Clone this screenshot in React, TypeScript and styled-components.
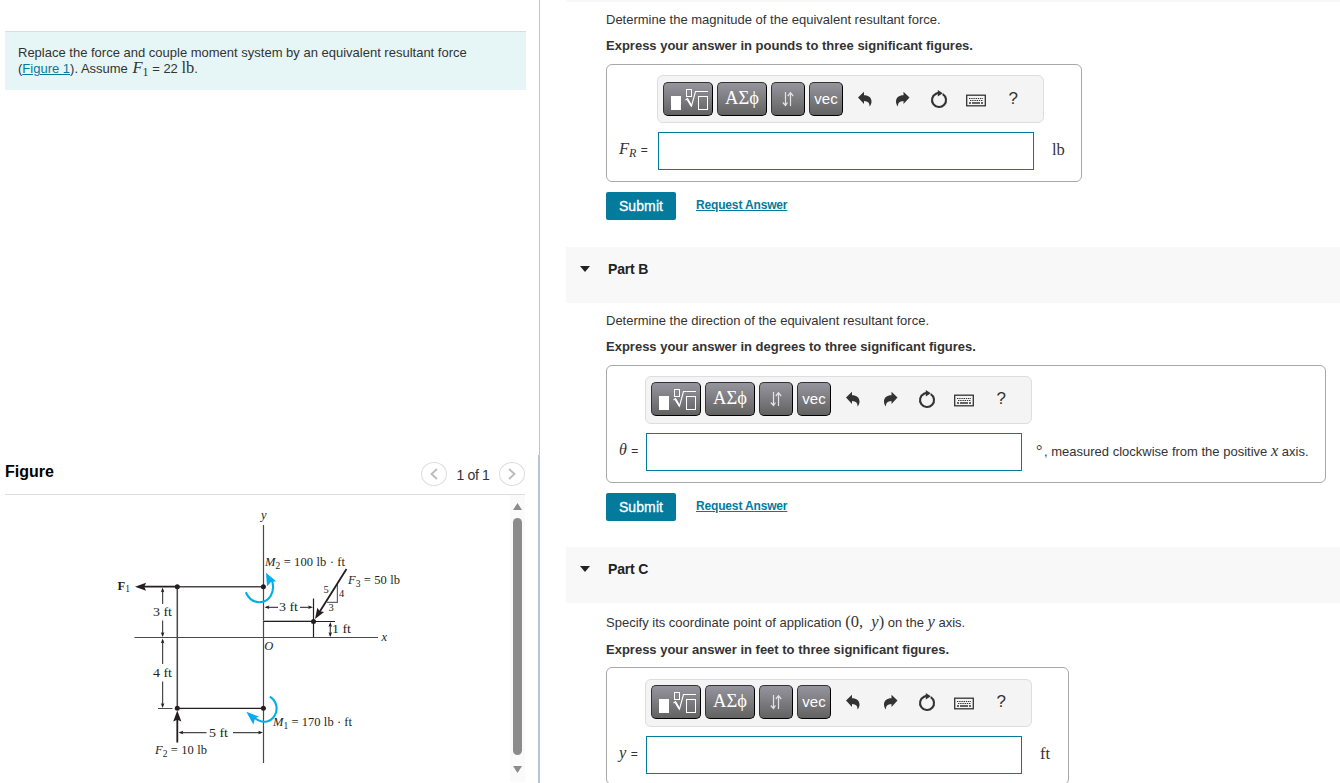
import React from "react";
import styled, { createGlobalStyle } from "styled-components";

const GlobalStyle = createGlobalStyle`
  * {
    box-sizing: border-box;
  }
  body {
    margin: 0;
    background: #fff;
    color: #333;
    font-family: "Liberation Sans", Arial, sans-serif;
    font-size: 13px;
    overflow: hidden;
  }
`;

const Page = styled.div`
  display: flex;
  height: 783px;
  overflow: hidden;
`;

const LeftPane = styled.div`
  width: 540px;
  flex-shrink: 0;
  display: flex;
  flex-direction: column;
`;

const ProblemArea = styled.div`
  height: 455px;
  padding: 31px 13px 0 5px;
  border-right: 1px solid #b5c7d9;
`;

const Problem = styled.div`
  height: 59px;
  padding: 13px 13px 0;
  background: #e6f6f6;
  border-top: 1px solid #d7dfe0;
  line-height: 16px;
`;

const Line = styled.div`
  height: 16px;
  white-space: nowrap;
`;

const Link = styled.a<{ $bold?: boolean }>`
  color: #047b9c;
  text-decoration: underline;
  font-weight: ${(p) => (p.$bold ? "bold" : "normal")};
`;

const MathText = styled.span<{ $size?: string; $italic?: boolean }>`
  font-family: "Liberation Serif", serif;
  font-size: ${(p) => p.$size || "16.5px"};
  font-style: ${(p) => (p.$italic ? "italic" : "normal")};
  line-height: 0;

  sub {
    font-size: 12px;
    line-height: 0;
    vertical-align: -3px;
  }
`;

const ProblemMath = styled(MathText)`
  margin-left: 1px;
`;

const FigureArea = styled.div`
  flex: 1;
  padding: 0 13px 0 5px;
  border-right: 2px solid #b5c7d9;
`;

const FigureHeader = styled.div`
  display: flex;
  align-items: center;
  height: 40px;
  width: 520px;
  border-bottom: 1px solid #ddd;
`;

const FigureTitle = styled.h2`
  margin: 0 auto 6px 0;
  font-size: 16px;
  color: #000;
`;

const PagerButton = styled.div`
  display: flex;
  align-items: center;
  justify-content: center;
  width: 26px;
  height: 24px;
  border: 1px solid #ddd;
  border-radius: 50%;
  margin-bottom: 2px;
`;

const PagerText = styled.span`
  width: 52px;
  text-align: center;
  font-size: 14px;
  letter-spacing: -0.3px;
  padding-top: 1px;
`;

const FigureBody = styled.div`
  display: flex;
  width: 520px;
  height: 288px;
`;

const Scrollbar = styled.div`
  width: 15px;
  height: 287px;
  background: #fafafa;
  display: flex;
  flex-direction: column;
  align-items: center;
  padding: 8px 0 9px;
`;

const Thumb = styled.div`
  width: 9px;
  flex: 1;
  margin: 8px 0 11px;
  border-radius: 5px;
  background: #8b8b8b;
`;

const RightPane = styled.div`
  flex: 1;
  min-width: 0;
  padding-left: 26px;
`;

const TopStrip = styled.div`
  height: 2px;
  background: #f8f8f8;
`;

const PartHeader = styled.div`
  display: flex;
  align-items: flex-start;
  height: 56px;
  padding: 14px 0 0 14px;
  background: #f8f8f8;

  svg {
    margin-top: 5px;
  }
`;

const PartTitle = styled.h3`
  margin: 0 0 0 18px;
  font-size: 14px;
  line-height: 16px;
  letter-spacing: -0.15px;
  color: #222;
`;

const PartBody = styled.div<{ $height: string }>`
  height: ${(p) => p.$height};
  padding: 9px 0 0 40px;
`;

const Prompt = styled.p<{ $tall?: boolean }>`
  margin: ${(p) => (p.$tall ? "2px 0 11px" : "0 0 10px")};
  height: 17px;
  line-height: 17px;
  white-space: nowrap;
`;

const Instructions = styled.p<{ $gap?: string }>`
  margin: 0 0 ${(p) => p.$gap || "10px"};
  height: 16px;
  line-height: 16px;
  font-weight: bold;
  white-space: nowrap;
`;

const AnswerBox = styled.div<{ $width: string; $label: string; $top?: string }>`
  display: grid;
  grid-template-columns: ${(p) => p.$label} 388px 1fr;
  align-content: start;
  width: ${(p) => p.$width};
  height: 118px;
  border: 1px solid #a8a8a8;
  border-radius: 6px;
  padding-top: ${(p) => p.$top || "10px"};
`;

const Toolbar = styled.div<{ $raised?: boolean }>`
  grid-column: 2 / 4;
  display: flex;
  align-items: center;
  gap: 4px;
  width: 387px;
  height: 48px;
  padding: ${(p) => (p.$raised ? "0 0 2px 5px" : "0 0 0 5px")};
  border: 1px solid #ddd;
  border-radius: 6px;
  background: #f4f4f4;
`;

const ToolButton = styled.div<{ $wide?: boolean; $font?: string }>`
  display: flex;
  align-items: center;
  justify-content: center;
  width: ${(p) => (p.$wide ? "50px" : "34px")};
  height: 34px;
  border: 1px solid #333;
  border-right-color: #000;
  border-bottom-color: #000;
  border-radius: 5px;
  background: linear-gradient(#96959e, #626262);
  color: #fff;
  font: ${(p) => p.$font || '15px "Liberation Sans", sans-serif'};
  padding-bottom: 2px;
`;

const ToolIcons = styled.div`
  display: flex;
  margin-left: -1px;
`;

const ToolIcon = styled.div`
  display: flex;
  align-items: center;
  justify-content: center;
  width: 37.2px;
  height: 34px;
  font-size: 17px;
`;

const FieldLabel = styled.div`
  padding-left: 12px;
  line-height: 37px;
  height: 38px;
  margin-top: 9px;
  white-space: nowrap;
  font-size: 12px;
  word-spacing: 1px;
`;

const Field = styled.div`
  width: 376px;
  height: 38px;
  margin: 9px 0 0 1px;
  border: 1px solid #047b9c;
  background: #fff;
`;

const Unit = styled.div<{ $indent?: string }>`
  margin: 9px 0 0 ${(p) => p.$indent || "7px"};
  height: 38px;
  line-height: 37px;
  white-space: nowrap;
`;

const Degree = styled.span`
  display: inline-block;
  width: 8px;
  line-height: 0;
  font-family: "Liberation Serif", serif;
  font-size: 16px;
`;

const Actions = styled.div`
  display: flex;
  align-items: center;
  gap: 20px;
  margin-top: 10px;
  font-size: 12px;

  a {
    margin-bottom: 3px;
    letter-spacing: -0.16px;
  }
`;

const SubmitButton = styled.div`
  width: 70px;
  height: 28px;
  border-radius: 2px;
  background: #047b9c;
  color: #fff;
  font-size: 14px;
  line-height: 28px;
  text-align: center;
  letter-spacing: 0.1px;
  -webkit-text-stroke: 0.3px #fff;
`;

const TemplateIcon = () => (
  <svg width="40" height="25" viewBox="0 0 40 25" fill="none" stroke="#fff">
    <rect x="3" y="10" width="10" height="14" fill="#fff" stroke="none" />
    <path d="M17.5 14l2-1.5 4 7.5 4-14.5H40" strokeWidth="1.1" />
    <path d="M19.5 13.5l4 6.5" strokeWidth="1.8" />
    <rect x="18.5" y="3.5" width="5" height="7" />
    <rect x="30.5" y="10.5" width="9" height="13" />
  </svg>
);

const UpDownIcon = () => (
  <svg width="14" height="17" viewBox="0 -1 14 17" fill="none" stroke="#e4e4e4" strokeWidth="1.2">
    <path d="M4.5 1v13.5M1.8 11.5l2.7 3 2-3M9.5 15V2M6.8 5L9.5 1.7 12.2 5" />
  </svg>
);

const UndoIcon = ({ flip }: { flip?: boolean }) => (
  <svg width="16" height="16" viewBox="0 0 16 16">
    <path
      transform={flip ? "translate(16.5 0) scale(-1 1)" : undefined}
      d="M1 6.5L7 0.8V4.2c4.7 0 7.5 2.4 7.5 6.2 0 2-.7 3.8-2 5.2.2-3.7-1.3-5.4-5.5-5.6v3z"
      fill="#333"
    />
  </svg>
);

const ResetIcon = () => (
  <svg width="18" height="19" viewBox="0 0 18 19">
    <path d="M12.7 4.1a7 7 0 1 1-6.6-.4" fill="none" stroke="#333" strokeWidth="2.1" />
    <path d="M7.8 0l5 3.3-5 3.2z" fill="#333" />
    <path d="M5.5 4l3-1.2" stroke="#333" strokeWidth="2" />
  </svg>
);

const KeyboardIcon = () => (
  <svg width="20" height="15" viewBox="0 -2 20 15" fill="none" stroke="#333">
    <rect x="0.7" y="1.2" width="18.6" height="10.6" strokeWidth="1.3" />
    <path d="M3 4.5h14M4 6.5h13" strokeDasharray="1.4 0.8" />
    <path d="M3 9h2M6 9h8M15 9h2" strokeWidth="1.6" />
  </svg>
);

const Arrow = ({ x, y, angle = 0, size = 1 }: { x: number; y: number; angle?: number; size?: number }) => (
  <path
    d="M0 0L-6 2.2L-5 0L-6 -2.2Z"
    fill="#231f20"
    transform={`translate(${x} ${y}) rotate(${angle}) scale(${size})`}
  />
);

const FigureSvg = styled.svg`
  display: block;
  flex-shrink: 0;

  text {
    font-family: "Liberation Serif", serif;
    font-size: 12.5px;
    fill: #231f20;
  }
  .i {
    font-style: italic;
  }
  .s {
    font-size: 9.5px;
    font-style: normal;
  }
  .dim {
    font-size: 13px;
  }
  .ratio {
    font-size: 10.5px;
  }
`;

const Dimension = ({ x, y, children }: { x: number; y: number; children: string }) => (
  <text className="dim" x={x} y={y} textLength="19" lengthAdjust="spacingAndGlyphs">
    {children}
  </text>
);

const Diagram = () => (
  <FigureSvg width="505" height="288" viewBox="5 495 505 288">
    <g fill="none" stroke="#4a4849" strokeWidth="1.2">
      <path d="M134.5 637.5H378M263.5 525V763" />
      <path d="M177.3 586V708" strokeWidth="1.5" />
      <path d="M177 586.7H263" strokeWidth="1.5" />
      <path d="M263.5 620.5H314" stroke="#bbb" />
      <path d="M177 708.4H263M263.5 621.5H335M313.5 598.5V637" stroke="#231f20" />
      <path d="M162.6 590V604M162.6 620.5V636M162.6 640V664M162.6 681.5V706M158 708.5H172.5" />
      <path d="M266 607.3H278M300 607.3H311M180 732.6H206.5M233 732.6H261M330.3 624V636" />
      <path d="M327 602.3H337.4V584" stroke="#666" />
    </g>
    <g stroke="#231f20" strokeWidth="1.8">
      <path d="M143 586.7H177M346.5 569L317 616M177.3 742.5V717" />
    </g>
    <Arrow x={135} y={586.7} angle={180} size={1.85} />
    <Arrow x={177.3} y={710.5} angle={-90} size={1.85} />
    <Arrow x={315} y={619} angle={122} size={1.8} />
    <Arrow x={162.6} y={587.5} angle={-90} size={0.8} />
    <Arrow x={162.6} y={637} angle={90} size={0.8} />
    <Arrow x={162.6} y={638.5} angle={-90} size={0.8} />
    <Arrow x={162.6} y={708} angle={90} size={0.8} />
    <Arrow x={264.5} y={607.3} angle={180} size={0.8} />
    <Arrow x={313} y={607.3} size={0.8} />
    <Arrow x={178.5} y={732.6} angle={180} size={0.8} />
    <Arrow x={263} y={732.6} size={0.8} />
    <Arrow x={330.3} y={622} angle={-90} size={0.8} />
    <Arrow x={330.3} y={637} angle={90} size={0.8} />
    <g fill="#231f20">
      <circle cx="177.3" cy="586.8" r="2.5" />
      <circle cx="263.4" cy="586.8" r="2.5" />
      <circle cx="313.5" cy="621.5" r="2.5" />
      <circle cx="177.3" cy="708.3" r="2.5" />
      <circle cx="263.4" cy="708.3" r="2.5" />
    </g>
    <g fill="none" stroke="#00aeef" strokeWidth="2.1">
      <path d="M245.8 592.3C249 599.5 254 602.4 260 602.2C269.5 601.5 275.5 592 272 580.5" />
      <path d="M269.8 696.6C276 700.5 278.5 708 275 715C270.5 723 262 724 254 717.5" />
    </g>
    <g fill="#00aeef">
      <path d="M266 572.7L276.2 581.2L271 582L267 586.2Z" />
      <path d="M246.3 711.8L259 716.5L255 718.5L253.3 724.5Z" />
    </g>
    <text className="i" x="261" y="519">y</text>
    <text className="i" x="381.5" y="641">x</text>
    <text className="i" x="264.3" y="650">O</text>
    <text x="117.5" y="590" fontWeight="bold">F<tspan className="s" dy="2" fontWeight="normal">1</tspan></text>
    <Dimension x={153} y={615.5}>3 ft</Dimension>
    <Dimension x={153} y={677}>4 ft</Dimension>
    <Dimension x={279} y={611}>3 ft</Dimension>
    <Dimension x={209} y={737}>5 ft</Dimension>
    <Dimension x={332} y={633}>1 ft</Dimension>
    <text x="265" y="566" textLength="80"><tspan className="i">M</tspan><tspan className="s" dy="3">2</tspan><tspan dy="-3"> = 100 lb · ft</tspan></text>
    <text x="348" y="584" textLength="52"><tspan className="i">F</tspan><tspan className="s" dy="3">3</tspan><tspan dy="-3"> = 50 lb</tspan></text>
    <text x="273" y="726" textLength="79"><tspan className="i">M</tspan><tspan className="s" dy="3">1</tspan><tspan dy="-3"> = 170 lb · ft</tspan></text>
    <text x="155" y="754" textLength="52"><tspan className="i">F</tspan><tspan className="s" dy="3">2</tspan><tspan dy="-3"> = 10 lb</tspan></text>
    <text className="ratio" x="323.5" y="593">5</text>
    <text className="ratio" x="339" y="597">4</text>
    <text className="ratio" x="328.5" y="611">3</text>
  </FigureSvg>
);

const AnswerToolbar = ({ raised }: { raised?: boolean }) => (
  <Toolbar $raised={raised}>
    <ToolButton $wide><TemplateIcon /></ToolButton>
    <ToolButton $wide $font='18.5px "Liberation Serif", serif'>ΑΣϕ</ToolButton>
    <ToolButton><UpDownIcon /></ToolButton>
    <ToolButton>vec</ToolButton>
    <ToolIcons>
      <ToolIcon><UndoIcon /></ToolIcon>
      <ToolIcon><UndoIcon flip /></ToolIcon>
      <ToolIcon><ResetIcon /></ToolIcon>
      <ToolIcon><KeyboardIcon /></ToolIcon>
      <ToolIcon>?</ToolIcon>
    </ToolIcons>
  </Toolbar>
);

type AnswerProps = {
  width: string;
  labelWidth: string;
  label: React.ReactNode;
  unit: React.ReactNode;
  top?: string;
  unitIndent?: string;
  raised?: boolean;
};

const Answer = ({ width, labelWidth, label, unit, top, unitIndent, raised }: AnswerProps) => (
  <AnswerBox $width={width} $label={labelWidth} $top={top}>
    <AnswerToolbar raised={raised} />
    <FieldLabel>{label} =</FieldLabel>
    <Field />
    <Unit $indent={unitIndent}>{unit}</Unit>
  </AnswerBox>
);

const AnswerActions = () => (
  <Actions>
    <SubmitButton>Submit</SubmitButton>
    <Link $bold>Request Answer</Link>
  </Actions>
);

const Header = ({ title }: { title: string }) => (
  <PartHeader>
    <svg width="10" height="6" viewBox="0 0 10 6"><path d="M0 0h10L5 6z" fill="#222" /></svg>
    <PartTitle>{title}</PartTitle>
  </PartHeader>
);

const Chevron = ({ right }: { right?: boolean }) => (
  <svg width="8" height="12" viewBox="0 0 8 12" fill="none" stroke="#bbb" strokeWidth="1.8">
    <path d={right ? "M1 1l5.5 5L1 11" : "M7 1L1.5 6 7 11"} />
  </svg>
);

export default function App() {
  return (
    <Page>
      <GlobalStyle />
      <LeftPane>
        <ProblemArea>
          <Problem>
            <Line>Replace the force and couple moment system by an equivalent resultant force</Line>
            <Line>
              (<Link>Figure 1</Link>). Assume <ProblemMath $italic>F</ProblemMath>
              <MathText><sub>1</sub></MathText> = 22 <MathText>lb</MathText>.
            </Line>
          </Problem>
        </ProblemArea>
        <FigureArea>
          <FigureHeader>
            <FigureTitle>Figure</FigureTitle>
            <PagerButton><Chevron /></PagerButton>
            <PagerText>1 of 1</PagerText>
            <PagerButton><Chevron right /></PagerButton>
          </FigureHeader>
          <FigureBody>
            <Diagram />
            <Scrollbar>
              <svg width="9" height="7" viewBox="0 0 9 7"><path d="M4.5 0L9 7H0z" fill="#8b8b8b" /></svg>
              <Thumb />
              <svg width="9" height="7" viewBox="0 0 9 7"><path d="M4.5 7L9 0H0z" fill="#8b8b8b" /></svg>
            </Scrollbar>
          </FigureBody>
        </FigureArea>
      </LeftPane>

      <RightPane>
        <TopStrip />
        <PartBody $height="245px">
          <Prompt>Determine the magnitude of the equivalent resultant force.</Prompt>
          <Instructions>Express your answer in pounds to three significant figures.</Instructions>
          <Answer
            width="476px"
            labelWidth="50px"
            label={<MathText $italic>F<sub>R</sub></MathText>}
            unit={<MathText>lb</MathText>}
          />
          <AnswerActions />
        </PartBody>

        <Header title="Part B" />
        <PartBody $height="244px">
          <Prompt>Determine the direction of the equivalent resultant force.</Prompt>
          <Instructions>Express your answer in degrees to three significant figures.</Instructions>
          <Answer
            width="720px"
            labelWidth="38px"
            unitIndent="3px"
            raised
            label={<MathText $italic $size="16px">θ</MathText>}
            unit={<><Degree>°</Degree>, measured clockwise from the positive <MathText $italic>x</MathText> axis.</>}
          />
          <AnswerActions />
        </PartBody>

        <Header title="Part C" />
        <PartBody $height="246px">
          <Prompt $tall>
            Specify its coordinate point of application <MathText>(0,&nbsp; <i>y</i>)</MathText> on the{" "}
            <MathText $italic>y</MathText> axis.
          </Prompt>
          <Instructions $gap="9px">Express your answer in feet to three significant figures.</Instructions>
          <Answer
            width="463px"
            labelWidth="38px"
            top="11px"
            raised
            label={<MathText $italic>y</MathText>}
            unit={<MathText>ft</MathText>}
          />
        </PartBody>
      </RightPane>
    </Page>
  );
}
